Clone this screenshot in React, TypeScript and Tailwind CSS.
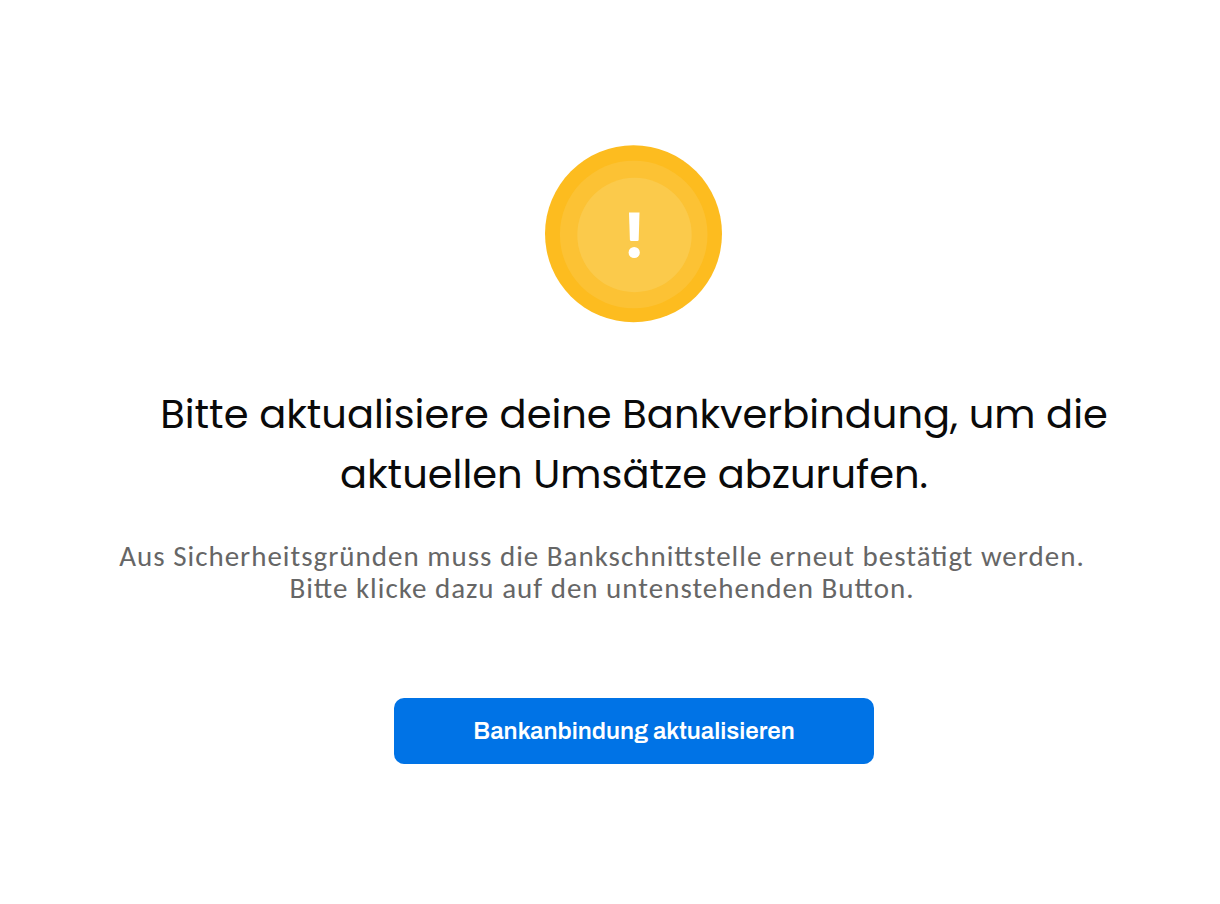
import React from 'react';

const WarningIcon: React.FC = () => (
  <svg className="w-[178px] h-[178px]" viewBox="0 0 178 178" fill="none" role="img" aria-label="Warnung">
    <circle cx="88.5" cy="88.8" r="88.5" fill="#fdbc1f" />
    <circle cx="88.7" cy="89.5" r="73.8" fill="#fcc234" />
    <circle cx="89.5" cy="90" r="57.2" fill="#fbca4b" />
    <path d="M84 67.5h10.5l-.8 27.2q-.1 1.3-1.4 1.3h-6q-1.3 0-1.4-1.3z" fill="#fff" />
    <circle cx="89.2" cy="107.5" r="5.6" fill="#fff" />
  </svg>
);

const App: React.FC = () => {
  return (
    <main className="min-h-screen bg-white flex flex-col items-center pl-12 pt-[145px] pb-35 text-center">
      <WarningIcon />
      <h1 className="mt-[61px] max-w-[1000px] font-['Poppins','Open_Sans',sans-serif] text-[40px] leading-[60px] text-[#0a0a0a]">
        Bitte aktualisiere deine Bankverbindung, um die
        <br />
        aktuellen Umsätze abzurufen.
      </h1>
      <p className="mt-9 mr-16 font-['Carlito','Lato',sans-serif] text-[29px] leading-8 tracking-[1px] [font-feature-settings:'liga'_1] text-[#666666]">
        Aus Sicherheitsgründen muss die Bankschnittstelle erneut bestätigt werden.
        <br />
        Bitte klicke dazu auf den untenstehenden Button.
      </p>
      <button
        type="button"
        className="mt-[94px] w-[480px] max-w-full rounded-[10px] bg-[#0073e6] py-[17px] font-['Archivo','Liberation_Sans',sans-serif] text-2xl font-semibold text-white"
      >
        Bankanbindung aktualisieren
      </button>
    </main>
  );
};

export default App;
